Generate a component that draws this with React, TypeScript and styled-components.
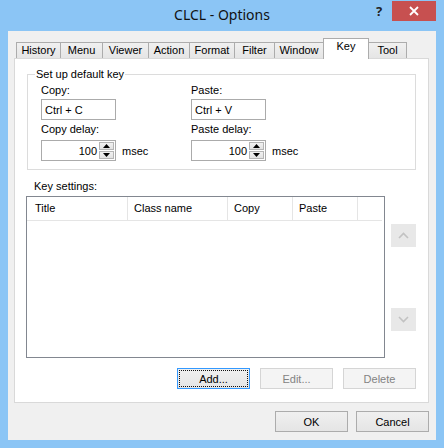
import styled, { createGlobalStyle } from 'styled-components';

const Global = createGlobalStyle`
  html, body {
    margin: 0;
    padding: 0;
    background: #8bc5f5;
  }
  body {
    font-family: "Liberation Sans", Arial, sans-serif;
    font-size: 11px;
    color: #000;
  }
`;

const Frame = styled.div`
  width: 444px;
  height: 448px;
  box-sizing: border-box;
  background: #8bc5f5;
  padding: 0 8px 8px;
  display: flex;
  flex-direction: column;
`;

const TitleBar = styled.div`
  height: 31px;
  display: grid;
  grid-template-columns: 1fr auto 1fr;
  align-items: start;
`;

const Title = styled.div`
  grid-column: 2;
  font-family: "Noto Sans", "Open Sans", sans-serif;
  font-size: 14px;
  line-height: 30px;
  color: #111;
`;

const Controls = styled.div`
  grid-column: 3;
  display: flex;
  justify-content: flex-end;
  margin-top: 1px;
`;

const Help = styled.div`
  width: 26px;
  height: 20px;
  display: flex;
  align-items: center;
  justify-content: center;
  font-family: "Noto Sans", sans-serif;
  font-weight: bold;
  font-size: 13px;
  color: #222;
`;

const Close = styled.div`
  width: 44px;
  height: 20px;
  background: #c75050;
  display: flex;
  align-items: center;
  justify-content: center;
`;

const Client = styled.div`
  flex: 1;
  background: #f0f0f0;
  padding: 7px 7px 8px 6px;
  display: flex;
  flex-direction: column;
`;

const TabStrip = styled.div`
  height: 20px;
  display: flex;
  align-items: flex-end;
  padding-left: 2px;
`;

const Tab = styled.div<{ $active?: boolean; $w: number }>`
  width: ${({ $w }) => $w}px;
  box-sizing: border-box;
  height: ${({ $active }) => ($active ? 21 : 16)}px;
  margin-bottom: ${({ $active }) => ($active ? -1 : 0)}px;
  margin-left: -1px;
  &:first-child { margin-left: 0; }
  border: 1px solid #acacac;
  border-bottom: none;
  background: ${({ $active }) => ($active ? '#fff' : 'linear-gradient(#f0f0f0, #e5e5e5)')};
  position: relative;
  z-index: ${({ $active }) => ($active ? 2 : 0)};
  text-align: center;
  padding-top: 1px;
  line-height: 13px;
`;

const Panel = styled.div`
  flex: 1;
  border: 1px solid #d9d9d9;
  background: #fff;
  padding: 9px 12px 0 11px;
  display: flex;
  flex-direction: column;
`;

const Group = styled.fieldset`
  margin: 0 0 0 1px;
  padding: 3px 12px 8px 13px;
  border: 1px solid #dcdcdc;
  min-inline-size: 0;
`;

const Legend = styled.legend`
  padding: 0 1px;
  margin-left: -6px;
  line-height: 13px;
`;

const FieldGrid = styled.div`
  display: grid;
  grid-template-columns: 150px 150px;
`;

const Field = styled.div`
  display: flex;
  flex-direction: column;
`;

const Label = styled.div<{ $gap?: number }>`
  line-height: 13px;
  margin-bottom: ${({ $gap }) => $gap ?? 2}px;
`;

const TextBox = styled.div`
  width: 75px;
  height: 21px;
  box-sizing: border-box;
  border: 1px solid #ababab;
  background: #fff;
  padding-left: 3px;
  display: flex;
  align-items: center;
  margin-bottom: 3px;
`;

const SpinRow = styled.div`
  display: flex;
  align-items: center;
`;

const SpinBox = styled.div`
  width: 75px;
  height: 21px;
  box-sizing: border-box;
  border: 1px solid #ababab;
  background: #fff;
  display: flex;
  align-items: center;
  justify-content: flex-end;
  padding: 1px;
`;

const SpinValue = styled.span`
  margin-right: 2px;
`;

const SpinButtons = styled.div`
  display: flex;
  flex-direction: column;
  gap: 1px;
  height: 100%;
`;

const SpinButton = styled.div`
  width: 15px;
  flex: 1;
  box-sizing: border-box;
  border: 1px solid #b5b5b5;
  background: linear-gradient(#f2f2f2, #e2e2e2);
  display: flex;
  align-items: center;
  justify-content: center;
`;

const Unit = styled.span`
  margin-left: 6px;
`;

const ListLabel = styled.div`
  line-height: 13px;
  margin: 10px 0 3px 8px;
`;

const ListRow = styled.div`
  display: flex;
  gap: 6px;
`;

const ListView = styled.div`
  width: 361px;
  height: 162px;
  box-sizing: border-box;
  border: 1px solid #828790;
  background: #fff;
`;

const Header = styled.div`
  display: flex;
  height: 23px;
  border-bottom: 1px solid #e5e5e5;
  margin-right: 2px;
`;

const HeaderCell = styled.div<{ $w: number; $pad?: number }>`
  width: ${({ $w }) => $w}px;
  box-sizing: border-box;
  border-right: 1px solid #e5e5e5;
  padding-left: ${({ $pad }) => $pad ?? 6}px;
  line-height: 23px;
`;

const MoveButtons = styled.div`
  display: flex;
  flex-direction: column;
  justify-content: space-between;
  padding: 28px 0 27px;
`;

const MoveButton = styled.div`
  width: 25px;
  height: 23px;
  background: #e8e8e8;
  display: flex;
  align-items: center;
  justify-content: center;
`;

const ButtonRow = styled.div<{ $top: number }>`
  display: flex;
  justify-content: flex-end;
  gap: 10px;
  margin-top: ${({ $top }) => $top}px;
`;

const Button = styled.div<{ $variant?: 'default' | 'disabled' }>`
  width: 73px;
  height: 21px;
  box-sizing: border-box;
  display: flex;
  align-items: center;
  justify-content: center;
  border: 1px solid ${({ $variant }) =>
    $variant === 'default' ? '#3399ff' : $variant === 'disabled' ? '#d5d5d5' : '#acacac'};
  background: ${({ $variant }) =>
    $variant === 'disabled' ? '#f4f4f4' : 'linear-gradient(#f0f0f0, #e5e5e5)'};
  color: ${({ $variant }) => ($variant === 'disabled' ? '#838383' : '#000')};
  outline: ${({ $variant }) => ($variant === 'default' ? '1px dotted #111' : 'none')};
  outline-offset: -3px;
`;

const Footer = styled(ButtonRow)`
  gap: 8px;
`;

const tabs = [
  { label: 'History', w: 45 },
  { label: 'Menu', w: 43 },
  { label: 'Viewer', w: 47 },
  { label: 'Action', w: 42 },
  { label: 'Format', w: 46 },
  { label: 'Filter', w: 41 },
  { label: 'Window', w: 50 },
  { label: 'Key', w: 46, active: true },
  { label: 'Tool', w: 39 },
];

const Arrow = ({ up }: { up?: boolean }) => (
  <svg width="7" height="4" viewBox="0 0 7 4">
    <polygon points={up ? '0,4 7,4 3.5,0' : '0,0 7,0 3.5,4'} fill="#000" />
  </svg>
);

const Chevron = ({ up }: { up?: boolean }) => (
  <svg width="11" height="7" viewBox="0 0 11 7">
    <polyline
      points={up ? '1,6 5.5,1.5 10,6' : '1,1 5.5,5.5 10,1'}
      fill="none"
      stroke="#c2c2c2"
      strokeWidth="1.6"
    />
  </svg>
);

const Spinner = ({ value }: { value: number }) => (
  <SpinRow>
    <SpinBox>
      <SpinValue>{value}</SpinValue>
      <SpinButtons>
        <SpinButton><Arrow up /></SpinButton>
        <SpinButton><Arrow /></SpinButton>
      </SpinButtons>
    </SpinBox>
    <Unit>msec</Unit>
  </SpinRow>
);

export default function App() {
  return (
    <Frame>
      <Global />
      <TitleBar>
        <Title>CLCL - Options</Title>
        <Controls>
          <Help>?</Help>
          <Close>
            <svg width="10" height="10" viewBox="0 0 10 10">
              <path d="M1 1L9 9M9 1L1 9" stroke="#fff" strokeWidth="1.8" />
            </svg>
          </Close>
        </Controls>
      </TitleBar>
      <Client>
        <TabStrip>
          {tabs.map((t) => (
            <Tab key={t.label} $w={t.w} $active={t.active}>{t.label}</Tab>
          ))}
        </TabStrip>
        <Panel>
          <Group>
            <Legend>Set up default key</Legend>
            <FieldGrid>
              <Field>
                <Label>Copy:</Label>
                <TextBox>Ctrl + C</TextBox>
                <Label $gap={4}>Copy delay:</Label>
                <Spinner value={100} />
              </Field>
              <Field>
                <Label>Paste:</Label>
                <TextBox>Ctrl + V</TextBox>
                <Label $gap={4}>Paste delay:</Label>
                <Spinner value={100} />
              </Field>
            </FieldGrid>
          </Group>
          <ListLabel>Key settings:</ListLabel>
          <ListRow>
            <ListView>
              <Header>
                <HeaderCell $w={101} $pad={8}>Title</HeaderCell>
                <HeaderCell $w={100}>Class name</HeaderCell>
                <HeaderCell $w={65}>Copy</HeaderCell>
                <HeaderCell $w={65}>Paste</HeaderCell>
              </Header>
            </ListView>
            <MoveButtons>
              <MoveButton><Chevron up /></MoveButton>
              <MoveButton><Chevron /></MoveButton>
            </MoveButtons>
          </ListRow>
          <ButtonRow $top={10}>
            <Button $variant="default">Add...</Button>
            <Button $variant="disabled">Edit...</Button>
            <Button $variant="disabled">Delete</Button>
          </ButtonRow>
        </Panel>
        <Footer $top={8}>
          <Button>OK</Button>
          <Button>Cancel</Button>
        </Footer>
      </Client>
    </Frame>
  );
}
